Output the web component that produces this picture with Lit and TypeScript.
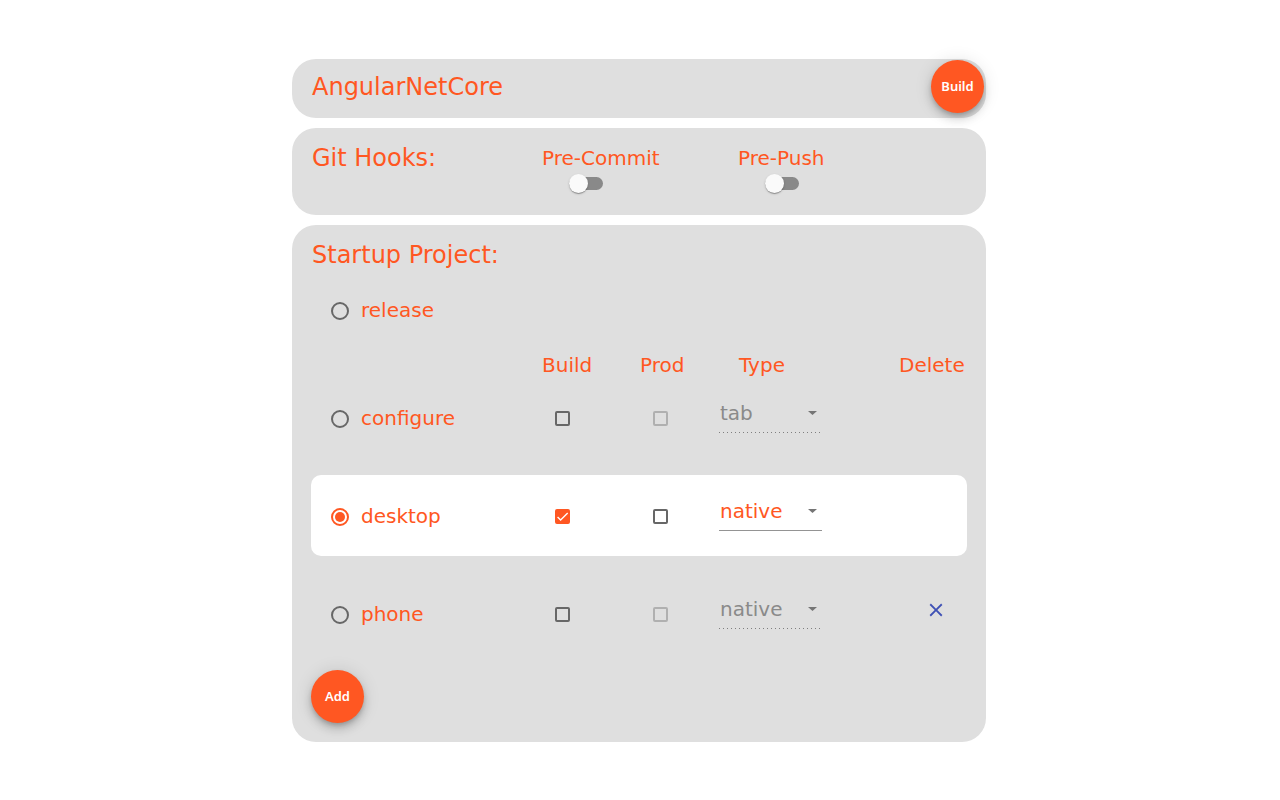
import { LitElement, html, css, svg, nothing } from "lit";
import { customElement, state } from "lit/decorators.js";
import { classMap } from "lit/directives/class-map.js";

interface Project {
  name: string;
  build: boolean;
  prod: boolean;
  type: "tab" | "native";
  removable: boolean;
}

@customElement("app-root")
export class AppRoot extends LitElement {
  @state() private selected = "desktop";

  @state() private projects: Project[] = [
    { name: "configure", build: false, prod: false, type: "tab", removable: false },
    { name: "desktop", build: true, prod: false, type: "native", removable: false },
    { name: "phone", build: false, prod: false, type: "native", removable: true },
  ];

  static styles = css`
    :host {
      display: block;
      box-sizing: border-box;
      padding: 59px 2px 58px 0;
      color: #ff5722;
      font: 20px/20px "DejaVu Sans", Verdana, sans-serif;
    }
    *, *::before, *::after { box-sizing: border-box; }
    .page {
      display: flex;
      flex-direction: column;
      gap: 10px;
      max-width: 694px;
      margin: 0 auto;
    }
    .card { background: #dfdfdf; border-radius: 24px; }
    .heading { margin: 0; font-size: 24px; line-height: 20px; font-weight: 400; }

    .top {
      display: flex;
      align-items: center;
      justify-content: space-between;
      padding: 1px 2px 5px 20px;
    }
    .fab {
      display: block;
      width: 53px;
      height: 53px;
      padding: 0 0 2px;
      border: 0;
      border-radius: 50%;
      background: #ff5722;
      color: #fff;
      font: 600 13px/20px "Noto Sans", sans-serif;
      cursor: pointer;
      box-shadow: 0 3px 5px -1px rgba(0, 0, 0, 0.2), 0 6px 10px 0 rgba(0, 0, 0, 0.14),
        0 1px 18px 0 rgba(0, 0, 0, 0.12);
    }

    .hooks {
      display: grid;
      grid-template-columns: 230px 196px 1fr;
      padding: 20px 20px 21px;
    }
    .hook { display: flex; flex-direction: column; align-items: flex-start; gap: 6px; }
    .switch {
      appearance: none;
      position: relative;
      width: 34px;
      height: 20px;
      margin: 0 0 0 27px;
      cursor: pointer;
    }
    .switch::before {
      content: "";
      position: absolute;
      inset: 3px 0 4px;
      border-radius: 8px;
      background: #898989;
    }
    .switch::after {
      content: "";
      position: absolute;
      left: 0;
      top: 0;
      width: 19px;
      height: 19px;
      border-radius: 50%;
      background: #fafafa;
      box-shadow: 0 2px 1px -1px rgba(0, 0, 0, 0.2), 0 1px 1px 0 rgba(0, 0, 0, 0.14),
        0 1px 3px 0 rgba(0, 0, 0, 0.12);
    }
    .switch:checked::before { background: #ffab91; }
    .switch:checked::after { left: 15px; background: #ff5722; }

    .startup { padding: 20px 19px 19px; }
    .startup .heading { padding-left: 1px; }
    .choice { display: flex; align-items: center; gap: 12px; padding-left: 20px; cursor: pointer; }
    .choice span { padding-bottom: 2px; }
    .release { margin: 35px 0 33px; }
    .radio {
      appearance: none;
      display: grid;
      place-items: center;
      width: 18px;
      height: 18px;
      margin: 0;
      border: 2px solid #676767;
      border-radius: 50%;
    }
    .radio:checked { border-color: #ff5722; }
    .radio:checked::before {
      content: "";
      width: 10px;
      height: 10px;
      border-radius: 50%;
      background: #ff5722;
    }

    table, thead, tbody { display: block; }
    .row, .columns {
      display: grid;
      grid-template-columns: 1fr 98px 79px 180px 68px;
    }
    .columns { margin-bottom: 2px; }
    th, td { padding: 0; text-align: left; font-weight: 400; }
    .type-title { padding-left: 20px; }
    .row {
      align-items: center;
      min-height: 81px;
      margin-bottom: 17px;
      padding-top: 2px;
      border-radius: 10px;
    }
    .row:last-child { margin-bottom: 16px; }
    .active { background: #fff; }

    .tick { position: relative; display: block; width: 15px; height: 15px; margin-left: 13px; }
    .box {
      appearance: none;
      display: block;
      width: 15px;
      height: 15px;
      margin: 0;
      border: 2px solid #676767;
      border-radius: 2px;
    }
    .box:checked { border-color: #ff5722; background: #ff5722; }
    .box:disabled { border-color: #b0b0b0; }
    .mark { position: absolute; inset: 0; pointer-events: none; }

    .field { position: relative; display: block; width: 103px; margin-bottom: 12px; }
    .select {
      appearance: none;
      display: block;
      width: 100%;
      height: 40px;
      margin: 0;
      padding: 0 0 0 1px;
      border: 0;
      border-radius: 0;
      color: #ff5722;
      font: inherit;
      opacity: 1;
      background: linear-gradient(#949494, #949494) left bottom / 100% 1px no-repeat;
    }
    .select:disabled {
      color: #8a8a8a;
      background: linear-gradient(to right, #7f7f7f 33%, transparent 0) left bottom / 4px 1px repeat-x;
    }
    .arrow { position: absolute; right: 5px; top: 18px; fill: #757575; pointer-events: none; }
    .remove {
      display: block;
      width: 24px;
      height: 24px;
      margin: 0 0 10px 25px;
      padding: 1px;
      border: 0;
      background: none;
      cursor: pointer;
    }
    .remove svg { display: block; fill: #3f51b5; }
  `;

  private change(name: string, patch: Partial<Project>) {
    this.projects = this.projects.map((p) => (p.name === name ? { ...p, ...patch } : p));
  }

  private radio(name: string) {
    return html`<label class="choice">
      <input class="radio" type="radio" name="startup" .checked=${this.selected === name}
        @change=${() => (this.selected = name)} />
      <span>${name}</span>
    </label>`;
  }

  private checkbox(p: Project, key: "build" | "prod") {
    return html`<span class="tick">
      <input class="box" type="checkbox" aria-label="${p.name} ${key}"
        .checked=${p[key]} ?disabled=${key === "prod" && !p.build}
        @change=${(e: Event) => this.change(p.name, { [key]: (e.target as HTMLInputElement).checked })} />
      ${p[key]
        ? html`<svg class="mark" width="15" height="15" viewBox="0 0 24 24" aria-hidden="true">
            ${svg`<path d="M4.1 12.7 9 17.6 20.3 6.3" fill="none" stroke="#fff" stroke-width="2.2"/>`}
          </svg>`
        : nothing}
    </span>`;
  }

  private row(p: Project) {
    return html`<tr class=${classMap({ row: true, active: this.selected === p.name })}>
      <td>${this.radio(p.name)}</td>
      <td>${this.checkbox(p, "build")}</td>
      <td>${this.checkbox(p, "prod")}</td>
      <td>
        <span class="field">
          <select class="select" aria-label="${p.name} type" ?disabled=${!p.build}
            @change=${(e: Event) => this.change(p.name, { type: (e.target as HTMLSelectElement).value as Project["type"] })}>
            <option value="tab" ?selected=${p.type === "tab"}>tab</option>
            <option value="native" ?selected=${p.type === "native"}>native</option>
          </select>
          <svg class="arrow" width="9" height="4" viewBox="0 0 9 4" aria-hidden="true"><path d="M0 0h9L4.5 4z" /></svg>
        </span>
      </td>
      <td>
        ${p.removable
          ? html`<button class="remove" aria-label="Delete ${p.name}"
              @click=${() => (this.projects = this.projects.filter((q) => q !== p))}>
              <svg width="22" height="22" viewBox="0 0 24 24" aria-hidden="true">
                <path d="M19 6.41 17.59 5 12 10.59 6.41 5 5 6.41 10.59 12 5 17.59 6.41 19 12 13.41 17.59 19 19 17.59 13.41 12z" />
              </svg>
            </button>`
          : nothing}
      </td>
    </tr>`;
  }

  render() {
    return html`<main class="page">
      <header class="card top">
        <h1 class="heading">AngularNetCore</h1>
        <button class="fab">Build</button>
      </header>

      <section class="card hooks">
        <h2 class="heading">Git Hooks:</h2>
        <label class="hook">Pre-Commit<input class="switch" type="checkbox" role="switch" /></label>
        <label class="hook">Pre-Push<input class="switch" type="checkbox" role="switch" /></label>
      </section>

      <section class="card startup">
        <h2 class="heading">Startup Project:</h2>
        <div class="release">${this.radio("release")}</div>
        <table>
          <thead>
            <tr class="columns">
              <td></td>
              <th scope="col">Build</th>
              <th scope="col">Prod</th>
              <th scope="col" class="type-title">Type</th>
              <th scope="col">Delete</th>
            </tr>
          </thead>
          <tbody>
            ${this.projects.map((p) => this.row(p))}
          </tbody>
        </table>
        <button class="fab">Add</button>
      </section>
    </main>`;
  }
}
